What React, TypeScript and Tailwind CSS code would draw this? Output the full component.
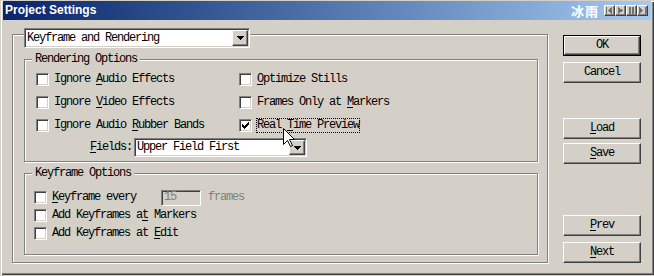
import React from "react";

const raised =
  "border border-t-white border-l-white border-r-[#404040] border-b-[#404040] shadow-[inset_-1px_-1px_0_#808080,inset_1px_1px_0_#d4d0c8]";
const sunken =
  "border border-t-[#808080] border-l-[#808080] border-r-white border-b-white shadow-[inset_1px_1px_0_#404040,inset_-1px_-1px_0_#d4d0c8]";
const etched =
  "border border-[#808080] shadow-[inset_1px_1px_0_#fff,1px_1px_0_#fff]";

function CheckMark() {
  const px: [number, number, number][] = [
    [6, 0, 1],
    [5, 1, 2],
    [0, 2, 1],
    [4, 2, 3],
    [0, 3, 2],
    [3, 3, 3],
    [0, 4, 5],
    [1, 5, 3],
    [2, 6, 1],
  ];
  return (
    <svg width="7" height="7" viewBox="0 0 7 7" shapeRendering="crispEdges">
      {px.map(([x, y, w], i) => (
        <rect key={i} x={x} y={y} width={w} height={1} fill="#000" />
      ))}
    </svg>
  );
}

function Check({ checked }: { checked?: boolean }) {
  return (
    <span
      className={`shrink-0 w-[13px] h-[13px] bg-white flex items-center justify-center ${sunken}`}
    >
      {checked && <CheckMark />}
    </span>
  );
}

function Row({
  checked,
  focus,
  children,
}: {
  checked?: boolean;
  focus?: boolean;
  children: React.ReactNode;
}) {
  return (
    <div className="flex items-center h-[13px]">
      <Check checked={checked} />
      {focus ? (
        <span className="ml-[4px] h-[15px] flex items-center border border-dotted border-black whitespace-pre">
          {children}
        </span>
      ) : (
        <span className="ml-[5px] whitespace-pre">{children}</span>
      )}
    </div>
  );
}

function U({ children }: { children: React.ReactNode }) {
  return <span className="underline underline-offset-[2px]">{children}</span>;
}

function Arrow() {
  return (
    <svg width="7" height="4" viewBox="0 0 7 4" shapeRendering="crispEdges">
      <rect x="0" y="0" width="7" height="1" fill="#000" />
      <rect x="1" y="1" width="5" height="1" fill="#000" />
      <rect x="2" y="2" width="3" height="1" fill="#000" />
      <rect x="3" y="3" width="1" height="1" fill="#000" />
    </svg>
  );
}

function Combo({
  text,
  className,
}: {
  text: string;
  className: string;
}) {
  return (
    <div className={`flex bg-white ${sunken} ${className}`}>
      <div className="flex-1 flex items-center pl-[2px] whitespace-pre">{text}</div>
      <div
        className={`w-[16px] m-[1px] bg-[#d4d0c8] flex items-center justify-center ${raised}`}
      >
        <Arrow />
      </div>
    </div>
  );
}

function Btn({
  children,
  def,
  className = "",
}: {
  children: React.ReactNode;
  def?: boolean;
  className?: string;
}) {
  const inner = (
    <div className={`flex-1 flex items-center justify-center ${raised}`}>{children}</div>
  );
  return (
    <div
      className={`w-[78px] h-[21px] flex ${def ? "border border-black" : ""} ${className}`}
    >
      {inner}
    </div>
  );
}

function MediaBtn({ kind }: { kind: "prev" | "play" | "pause" | "next" }) {
  const c = "#707070";
  return (
    <div className={`w-[11px] h-[11px] bg-[#d4d0c8] flex items-center justify-center ${raised}`}>
      <svg width="7" height="7" viewBox="0 0 7 7" shapeRendering="crispEdges">
        {kind === "prev" && (
          <>
            <rect x="0" y="0" width="1" height="7" fill={c} />
            <path d="M6 0 L2 3.5 L6 7 Z" fill={c} />
          </>
        )}
        {kind === "play" && <path d="M1 0 L6 3.5 L1 7 Z" fill={c} />}
        {kind === "pause" && (
          <>
            <rect x="1" y="0" width="2" height="7" fill={c} />
            <rect x="4" y="0" width="2" height="7" fill={c} />
          </>
        )}
        {kind === "next" && (
          <>
            <path d="M0 0 L4 3.5 L0 7 Z" fill={c} />
            <rect x="6" y="0" width="1" height="7" fill={c} />
          </>
        )}
      </svg>
    </div>
  );
}

function GroupLabel({ children }: { children: React.ReactNode }) {
  return (
    <div className="self-start -mt-[7px] ml-[7px] h-[12px] leading-[12px] px-[3px] bg-[#d4d0c8] whitespace-pre">
      {children}
    </div>
  );
}

export default function App() {
  return (
    <div className="w-[654px] h-[276px] bg-[#d4d0c8]">
      <div className="relative w-[654px] h-[275px] bg-[#d4d0c8] flex flex-col font-['Liberation_Mono','DejaVu_Sans_Mono',monospace] text-[12px] leading-[13px] tracking-[-1.2px] text-black shadow-[inset_1px_1px_0_#d4d0c8,inset_2px_2px_0_#fff,inset_-1px_-1px_0_#404040,inset_-2px_-2px_0_#808080]">
        {/* Title bar */}
        <div className="mx-[3px] mt-[1px] h-[19px] flex items-center bg-gradient-to-r from-[#0a246a] to-[#a6caf0] pl-[2px] pr-[3px]">
          <span className="font-['Liberation_Sans',Arial,sans-serif] font-bold text-[12px] tracking-normal text-white">
            Project Settings
          </span>
          <span className="ml-auto font-['Noto_Sans_CJK_SC',sans-serif] font-bold text-[13px] tracking-[1px] text-white">
            冰雨
          </span>
          <div className="ml-[5px] flex">
            <MediaBtn kind="prev" />
            <MediaBtn kind="play" />
            <MediaBtn kind="pause" />
            <MediaBtn kind="next" />
          </div>
        </div>

        {/* Body */}
        <div className="flex">
          <div className={`ml-[12px] mt-[14px] w-[536px] h-[229px] flex flex-col ${etched}`}>
            <Combo
              text="Keyframe and Rendering"
              className="-mt-[7px] ml-[11px] w-[226px] h-[20px]"
            />

            {/* Rendering Options */}
            <div className={`mt-[11px] ml-[11px] w-[514px] h-[103px] flex flex-col ${etched}`}>
              <GroupLabel>Rendering Options</GroupLabel>
              <div className="mt-[8px] ml-[11px] grid grid-cols-[203px_auto] gap-y-[10px]">
                <Row>
                  Ignore <U>A</U>udio Effects
                </Row>
                <Row>
                  <U>O</U>ptimize Stills
                </Row>
                <Row>
                  Ignore <U>V</U>ideo Effects
                </Row>
                <Row>
                  Frames Only at <U>M</U>arkers
                </Row>
                <Row>
                  Ignore Audio <U>R</U>ubber Bands
                </Row>
                <Row checked focus>
                  Real <U>T</U>ime Preview
                </Row>
              </div>
              <div className="mt-[6px] ml-[65px] flex items-center h-[19px]">
                <span className="whitespace-pre">
                  <U>F</U>ields:
                </span>
                <Combo text="Upper Field First" className="ml-[2px] w-[173px] h-[19px]" />
              </div>
            </div>

            {/* Keyframe Options */}
            <div className={`mt-[11px] ml-[11px] w-[514px] h-[82px] flex flex-col ${etched}`}>
              <GroupLabel>Keyframe Options</GroupLabel>
              <div className="mt-[12px] ml-[9px] flex flex-col gap-y-[5px]">
                <div className="flex items-center h-[13px]">
                  <Check />
                  <span className="ml-[5px] whitespace-pre">
                    <U>K</U>eyframe every
                  </span>
                  <div
                    className={`ml-[25px] w-[40px] h-[16px] shrink-0 flex items-center pl-[2px] text-[#808080] ${sunken}`}
                  >
                    15
                  </div>
                  <span className="ml-[7px] text-[#808080]">frames</span>
                </div>
                <Row>
                  Add Keyframes a<U>t</U> Markers
                </Row>
                <Row>
                  Add Keyframes at <U>E</U>dit
                </Row>
              </div>
            </div>
          </div>

          {/* Buttons */}
          <div className="ml-[15px] mt-[15px] flex flex-col">
            <Btn def>OK</Btn>
            <Btn className="mt-[6px]">Cancel</Btn>
            <Btn className="mt-[35px]">
              <U>L</U>oad
            </Btn>
            <Btn className="mt-[4px]">
              <U>S</U>ave
            </Btn>
            <Btn className="mt-[51px]">
              <U>P</U>rev
            </Btn>
            <Btn className="mt-[6px]">
              <U>N</U>ext
            </Btn>
          </div>
        </div>

        {/* Mouse cursor */}
        <svg
          className="absolute left-[283px] top-[128px]"
          width="13"
          height="20"
          viewBox="0 0 13 20"
        >
          <path
            d="M0.5 0.5 L0.5 16.5 L4.5 12.5 L7.5 18.5 L9.5 17.5 L6.5 11.5 L11.5 11.5 Z"
            fill="#fff"
            stroke="#000"
            strokeWidth="1"
          />
        </svg>
      </div>
    </div>
  );
}
